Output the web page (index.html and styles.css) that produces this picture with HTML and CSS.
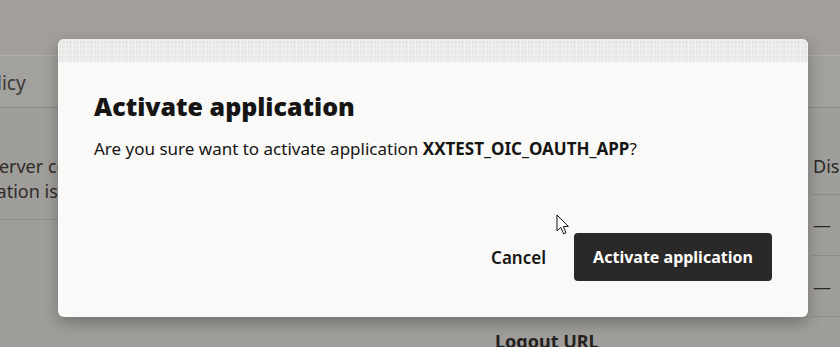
FILE: index.html
```html
<!DOCTYPE html>
<html>
<head>
<meta charset="utf-8">
<link rel="stylesheet" href="styles.css">
</head>
<body>
<div class="page">
  <div class="header"></div>
  <div class="tabs"><span class="tab">Policy</span></div>
  <div class="content">
    <div class="col-a">
      <div class="section">
        <div class="desc line1">Server configuration</div>
        <div class="desc line2">Application is disabled</div>
      </div>
    </div>
    <div class="col-b">
      <div class="spacer-b"></div>
      <div class="label">Logout URL</div>
    </div>
    <div class="col-c">
      <div class="cell c1">Disabled</div>
      <div class="cell c2">—</div>
      <div class="cell c3">—</div>
    </div>
  </div>
</div>

<div class="overlay">
  <div class="dialog">
    <div class="dialog-top"></div>
    <div class="dialog-body">
      <h1 class="title">Activate application</h1>
      <p class="message">Are you sure want to activate application <b>XXTEST_OIC_OAUTH_APP</b>?</p>
    </div>
    <div class="dialog-footer">
      <button class="btn-cancel">Cancel</button>
      <button class="btn-primary">Activate application</button>
    </div>
  </div>
  <svg class="cursor" width="14" height="22" viewBox="0 0 14 22">
    <path d="M1 1 L1 17 L4.8 13.4 L7.6 19.8 L10 18.8 L7.3 12.6 L12.4 12.4 Z" fill="#ffffff" stroke="#111" stroke-width="1" stroke-linejoin="round"/>
  </svg>
</div>
</body>
</html>
```

FILE: styles.css
```css
* { box-sizing: border-box; }
html, body { margin: 0; padding: 0; }
body {
  width: 840px;
  height: 347px;
  overflow: hidden;
  font-family: "Noto Sans", "Open Sans", sans-serif;
  background: #a09e9b;
  position: relative;
}
.page { width: 840px; height: 347px; }
.header {
  height: 56px;
  background: #a29f9a;
  border-bottom: 1px solid #b0aeab;
}
.tabs {
  height: 52px;
  background: #a3a19e;
  border-bottom: 1px solid #8e8c89;
  display: flex;
  align-items: center;
  padding-top: 3px;
  margin-left: -26px;
}
.tab { font-size: 19px; color: #3a3836; }
.content {
  display: grid;
  grid-template-columns: 470px 342px 28px;
  background: #a09e9b;
}
.col-a { overflow: hidden; }
.section {
  height: 112px;
  border-bottom: 1px solid #8e8c89;
  padding-top: 46px;
}
.desc {
  font-size: 18px;
  line-height: 25px;
  color: #2e2a27;
  white-space: nowrap;
}
.line1 { margin-left: -11px; }
.line2 { margin-left: -55px; }
.spacer-b { height: 221px; }
.label { font-size: 18px; font-weight: 700; color: #24211f; padding-left: 25px; }
.col-c { display: flex; flex-direction: column; }
.cell {
  border-bottom: 1px solid #8e8c89;
  font-size: 18px;
  color: #2a2725;
  white-space: nowrap;
  padding-left: 1px;
}
.c1 { height: 87px; padding-top: 46px; }
.c2 { height: 61px; padding-top: 18px; }
.c3 { height: 61px; padding-top: 19px; }

.overlay {
  position: absolute;
  inset: 0;
}
.dialog {
  position: absolute;
  left: 58px;
  top: 39px;
  width: 750px;
  height: 278px;
  background: #f9f9f7;
  border-radius: 6px;
  overflow: hidden;
  box-shadow: 0 6px 16px rgba(0,0,0,0.28);
  display: flex;
  flex-direction: column;
}
.dialog-top {
  height: 23px;
  background-color: #ebebea;
  background-image:
    repeating-linear-gradient(90deg, rgba(255,255,255,0.45) 0 1px, transparent 1px 3px, rgba(255,255,255,0.3) 3px 4px, transparent 4px 7px),
    repeating-linear-gradient(0deg, rgba(215,215,212,0.35) 0 1px, transparent 1px 3px, rgba(225,225,222,0.3) 3px 5px);
}
.dialog-body { padding: 27px 36px 0 36px; flex: 1; }
.title {
  margin: 0;
  font-size: 25px;
  line-height: 35px;
  font-weight: 900;
  color: #161513;
}
.message {
  margin: 13px 0 0 0;
  font-size: 17px;
  line-height: 24px;
  color: #161513;
}
.message b { font-weight: 700; }
.dialog-footer {
  display: flex;
  justify-content: flex-end;
  align-items: center;
  gap: 28px;
  padding: 0 36px 36px 0;
}
.btn-cancel {
  border: none;
  background: none;
  font-family: inherit;
  font-size: 17px;
  font-weight: 600;
  color: #161513;
  padding: 0;
}
.btn-primary {
  border: none;
  background: #2b2927;
  color: #ffffff;
  font-family: inherit;
  font-size: 16px;
  font-weight: 700;
  height: 48px;
  width: 198px;
  border-radius: 4px;
  padding: 0;
}
.cursor {
  position: absolute;
  left: 556px;
  top: 214px;
}
```
